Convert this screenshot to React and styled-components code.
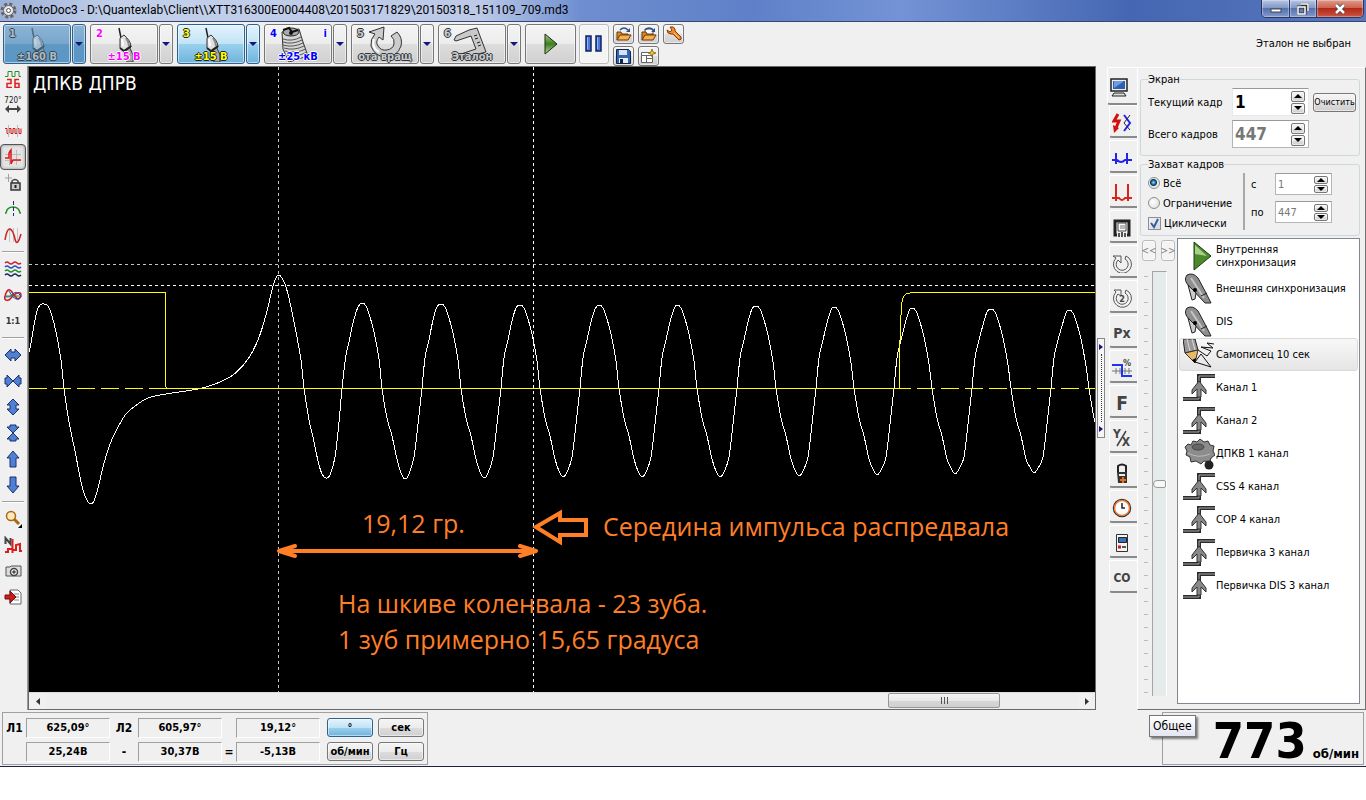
import { useState } from 'react';
import styled, { createGlobalStyle, css } from 'styled-components';

const GlobalStyle = createGlobalStyle`
  * { box-sizing: border-box; }
  body {
    margin: 0;
    background: #ffffff;
    color: #000000;
    font-family: "DejaVu Sans Condensed", "Noto Sans", sans-serif;
    font-size: 11px;
  }
  button, input {
    font: inherit;
    color: inherit;
    margin: 0;
    padding: 0;
  }
  svg { display: block; flex: none; }
`

const Window = styled.div`
  display: flex;
  flex-direction: column;
  height: calc(100vh - 33px);
  min-height: 640px;
  background: #f0f0f0;
  border-bottom: 1px solid #1b2340;
`

/* title bar */

const TitleBar = styled.header`
  display: flex;
  align-items: center;
  justify-content: space-between;
  height: 22px;
  flex: none;
  padding: 0 2px 0 0;
  border-bottom: 1px solid #36466f;
  background: linear-gradient(90deg, #9cb0d8 0, #c3d0ea 120px, #bccae8 480px, #6f8ed0 580px, #5f80c8 750px, #7493d6 900px, #4566b2 1130px, #5877bd 100%);
`

const TitleText = styled.h1`
  display: flex;
  align-items: center;
  gap: 5px;
  margin: 0;
  font: 400 12px/21px Roboto, "Noto Sans", sans-serif;
  white-space: nowrap;
`

const WindowButtons = styled.div`
  display: flex;
  align-self: flex-start;
  height: 18px;
  border: 1px solid #26365e;
  border-top: 0;
  border-radius: 0 0 5px 5px;
  overflow: hidden;
`

const WindowButton = styled.button`
  display: flex;
  align-items: center;
  justify-content: center;
  width: ${(p) => (p.$close ? 47 : 27)}px;
  border: 0;
  border-left: ${(p) => (p.$first ? '0' : '1px solid #2a3b69')};
  background: ${(p) => p.$close
    ? 'linear-gradient(#dd9a8c, #cf6350 45%, #b22a17 50%, #cd5140)'
    : 'linear-gradient(#b7c5e2, #8298c8 45%, #5671ad 50%, #7f98cd)'};
  box-shadow: inset 0 0 1px 1px rgba(255, 255, 255, 0.35);
`

/* toolbar */

const Toolbar = styled.div`
  display: flex;
  align-items: flex-start;
  height: 44px;
  flex: none;
  padding: 2px 15px 0 3px;
`

const Channel = styled.div`
  display: flex;
  gap: 1px;
  margin-right: 4px;
`

const faces = {
  plain: css`
    background: linear-gradient(#f4f4f4, #ececec 50%, #dddddd 51%, #d0d0d0);
    border-color: #777777;
  `,
  pressed: css`
    background: linear-gradient(#8db4d4, #76a7cd 50%, #5e98c3 51%, #5a97c5);
    border-color: #2f618c;
  `,
  lit: css`
    background: linear-gradient(#e3f3fc, #c2e3f6 50%, #9ad0ee 51%, #6fb3dc);
    border-color: #2c628b;
  `,
  faint: css`
    background: #f4f4f4;
    border-color: #bbbbbb;
  `,
}

const Button = styled.button`
  display: flex;
  align-items: center;
  justify-content: center;
  border: 1px solid;
  border-radius: 3px;
  box-shadow: inset 0 0 0 1px rgba(255, 255, 255, 0.5);
  ${(p) => faces[p.$face || 'plain']}
`

const ChannelButton = styled(Button)`
  position: relative;
  width: 68px;
  height: 40px;
  overflow: hidden;
  color: ${(p) => p.$ink};
  text-shadow: ${(p) => {
    const c = p.$halo
    return `1px 0 ${c}, -1px 0 ${c}, 0 1px ${c}, 0 -1px ${c}`
  }};
`

const ChannelNumber = styled.span`
  position: absolute;
  top: 2px;
  left: 5px;
  font-weight: 700;
  line-height: 13px;
`

const ChannelMark = styled(ChannelNumber)`
  left: auto;
  right: 4px;
`

const ChannelRange = styled.span`
  position: absolute;
  left: 0;
  right: 0;
  bottom: 0;
  font-weight: 700;
  line-height: 12px;
  white-space: nowrap;
  text-align: center;
`

const DropButton = styled(Button)`
  width: 14px;
  height: 40px;
`

const PlayButton = styled(Button)`
  width: 51px;
  height: 40px;
  margin-right: 3px;
`

const PauseButton = styled(Button)`
  width: 30px;
  height: 40px;
  margin-right: 4px;
`

const FileButtons = styled.div`
  display: grid;
  grid-template-columns: repeat(3, 21px);
  gap: 2px 4px;
`

const FileButton = styled(Button)`
  width: 21px;
  height: 20px;
`

const Reference = styled.p`
  margin: 13px 0 0 auto;
  line-height: 14px;
`

/* middle part */

const Main = styled.main`
  display: flex;
  flex: 1;
  min-height: 0;
`

const Tools = styled.nav`
  display: flex;
  flex-direction: column;
  align-items: center;
  width: 28px;
  flex: none;
  border-right: 1px solid #9a9a9a;
  padding-right: 1px;
`

const Tool = styled.button`
  display: flex;
  align-items: center;
  justify-content: center;
  width: 26px;
  height: 26px;
  flex: none;
  border: 1px solid ${(p) => (p.$active ? '#555555' : 'transparent')};
  border-radius: 4px;
  background: ${(p) => (p.$active ? '#e4e4e4' : 'none')};
  box-shadow: ${(p) => (p.$active ? 'inset 0 0 3px #888888' : 'none')};
`

const ToolLine = styled.hr`
  width: 22px;
  height: 2px;
  flex: none;
  margin: 3px 0;
  border: 0;
  background: #a0a0a0;
  border-bottom: 1px solid #ffffff;
`

const Scope = styled.section`
  display: flex;
  flex-direction: column;
  flex: 1;
  min-width: 0;
  border: 1px solid #696969;
`

const Screen = styled.div`
  flex: 1;
  min-height: 0;
  background: #000000;

  svg {
    width: 100%;
    height: 100%;
  }
`

const ScrollBar = styled.div`
  display: flex;
  justify-content: space-between;
  height: 17px;
  flex: none;
  background: #eeeeee;
  border-top: 1px solid #dddddd;
`

const ScrollArrow = styled.button`
  display: flex;
  align-items: center;
  justify-content: center;
  width: 17px;
  border: 0;
  background: #f0f0f0;
`

const ScrollTrack = styled.div`
  display: flex;
  flex: 1;
  justify-content: flex-end;
  padding-right: 78px;
`

const ScrollThumb = styled.div`
  display: flex;
  align-items: center;
  justify-content: center;
  gap: 2px;
  width: 112px;
  height: 15px;
  border: 1px solid #979797;
  border-radius: 2px;
  background: linear-gradient(#f5f5f5, #e9e9e9 50%, #d6d6d6 51%, #d0d0d0);
`

const Grip = styled.i`
  width: 1px;
  height: 7px;
  background: #555555;
`

const Splitter = styled.div`
  display: flex;
  align-items: center;
  width: 11px;
  flex: none;
`

const SplitterHandle = styled.button`
  display: flex;
  flex-direction: column;
  align-items: center;
  justify-content: space-between;
  width: 8px;
  height: 100px;
  margin-left: 1px;
  padding: 5px 0;
  border: 1px solid #888888;
  background: #f6f6f6;
`

const Dots = styled.i`
  height: 68px;
  border-left: 1px dotted #333333;
`

const Tabs = styled.div`
  display: flex;
  flex-direction: column;
  width: 30px;
  flex: none;
  padding-top: 1px;
`

const Tab = styled.button`
  display: flex;
  align-items: center;
  justify-content: center;
  width: ${(p) => (p.$active ? 30 : 28)}px;
  height: ${(p) => (p.$active ? 38 : 33)}px;
  flex: none;
  align-self: flex-end;
  margin-bottom: ${(p) => (p.$active ? 0 : 2)}px;
  padding: 4px ${(p) => (p.$active ? 8 : 4)}px 0 0;
  border: 0;
  border-left: 1px solid #ffffff;
  border-top: 1px solid #ffffff;
  border-bottom: 2px solid #8a8a8a;
  border-radius: 2px 0 0 3px;
  background: none;
`

const Panel = styled.aside`
  display: flex;
  flex-direction: column;
  width: 229px;
  flex: none;
  margin-top: 1px;
  padding: 5px 5px 5px 2px;
  border: 1px solid;
  border-color: #ffffff #707070 #707070 #ffffff;
`

const Group = styled.fieldset`
  min-width: 0;
  height: ${(p) => p.$height}px;
  flex: none;
  margin: 0 0 2px;
  padding: 0 3px 0 7px;
  border: 1px solid #cdd8dd;
  border-radius: 3px;
`

const Legend = styled.legend`
  padding: 0;
  line-height: 13px;
`

const FrameRow = styled.div`
  display: grid;
  grid-template-columns: 84px 81px 43px;
  align-items: center;
  height: 32px;

  label { white-space: nowrap; }
`

const SpinBox = styled.div`
  display: flex;
  align-items: center;
  justify-content: space-between;
  width: ${(p) => (p.$small ? 57 : 77)}px;
  height: ${(p) => (p.$small ? 22 : 28)}px;
  padding: 0 3px 0 2px;
  border: 1px solid ${(p) => (p.$live ? '#e3e9ef' : '#b5b5b5')};
  border-top-color: #999999;
  background: #ffffff;
`

const SpinInput = styled.input`
  flex: 1;
  width: 20px;
  height: 100%;
  border: 0;
  outline: 0;
  background: none;
  color: ${(p) => (p.$live ? '#000000' : '#777777')};
  font-size: ${(p) => (p.$small ? 11 : 17)}px;
  font-weight: ${(p) => (p.$small ? 400 : 700)};
`

const SpinButtons = styled.div`
  display: flex;
  flex-direction: column;
  gap: 1px;
`

const SpinButton = styled(Button)`
  width: 14px;
  height: ${(p) => (p.$small ? 8 : 11)}px;
  border-radius: 2px;
`

const ClearButton = styled(Button)`
  width: 43px;
  height: 19px;
  font-size: 9px;
  overflow: hidden;
  white-space: nowrap;
`

const Capture = styled.div`
  display: flex;
  padding-top: 2px;
`

const CaptureModes = styled.div`
  display: flex;
  flex-direction: column;
  width: 97px;
  border-right: 2px solid #a8a8a8;
  height: 57px;
`

const Choice = styled.label`
  display: flex;
  align-items: center;
  gap: 3px;
  height: 20px;
  flex: none;
  white-space: nowrap;
`

const Radio = styled.input`
  appearance: none;
  width: 12px;
  height: 12px;
  flex: none;
  border: 1px solid #8e8f8f;
  border-radius: 50%;
  background: radial-gradient(circle at 40% 40%, #ffffff, #d8d8d8);

  &:checked {
    background: radial-gradient(circle at 45% 45%, #9fe0f5 0, #1b6f9e 2px, #0b3551 3px, #e3e9ec 4px);
  }
`

const Check = styled.input`
  appearance: none;
  width: 13px;
  height: 13px;
  flex: none;
  border: 1px solid #8e8f8f;
  background: #eef1f4;

  &:checked {
    background: #eef1f4 linear-gradient(135deg, transparent, #d3dae4);
  }
`

const CheckWrap = styled.span`
  display: grid;

  > * { grid-area: 1 / 1; }
  > svg { pointer-events: none; }
`

const Limits = styled.div`
  display: grid;
  grid-template-columns: 18px 57px;
  row-gap: 6px;
  column-gap: 6px;
  align-items: center;
  align-content: start;
  padding-left: 6px;
`

const Lower = styled.div`
  display: flex;
  flex: 1;
  min-height: 0;
`

const GainColumn = styled.div`
  display: flex;
  flex-direction: column;
  width: 37px;
  flex: none;
  padding: 2px 2px 8px;
`

const NavButtons = styled.div`
  display: flex;
  justify-content: space-between;
  margin-bottom: 10px;
`

const NavButton = styled(Button)`
  width: 14px;
  height: 21px;
  color: #888888;
  font-size: 10px;
`

const Gain = styled.div`
  display: flex;
  flex: 1;
  min-height: 0;
  justify-content: space-between;
  padding: 0 8px 0 2px;
`

const Ticks = styled.i`
  width: 4px;
  margin-top: 5px;
  background: repeating-linear-gradient(#bbbbbb 0 1px, transparent 1px 13px);
`

const GainSlider = styled.input`
  appearance: none;
  writing-mode: vertical-lr;
  width: 15px;
  height: 100%;
  border-left: 1px solid #a5a5a5;
  border-top: 1px solid #a5a5a5;
  border-right: 1px solid #ffffff;
  background: #e5eaeb;

  &::-webkit-slider-thumb {
    appearance: none;
    width: 13px;
    height: 8px;
    border: 1px solid #999999;
    border-radius: 4px 2px 2px 4px;
    background: #f7f7f7;
  }
`

const SyncList = styled.ul`
  flex: 1;
  margin: 0;
  padding: 0 1px;
  list-style: none;
  overflow: hidden;
  border: 1px solid #828790;
  background: #ffffff;
`

const SyncItem = styled.li`
  display: flex;
  align-items: center;
  gap: 1px;
  height: 33px;
  padding-left: 3px;
  line-height: 13px;
  border: 1px solid ${(p) => (p.$active ? '#d9d9d9' : 'transparent')};
  border-radius: 3px;
  background: ${(p) => (p.$active ? 'linear-gradient(#f8f8f8, #e5e5e5)' : 'none')};
`

/* bottom */

const Status = styled.footer`
  display: flex;
  justify-content: space-between;
  height: 56px;
  flex: none;
  padding: 2px 2px 1px;
`

const Readings = styled.div`
  display: grid;
  grid-template-columns: 23px 84px 28px 84px 14px 84px 53px 51px;
  grid-template-rows: 20px 20px;
  row-gap: 4px;
  padding: 5px 3px 0 0;
  border: 1px solid #a0a0a0;
  font-weight: 700;
  line-height: 20px;
  text-align: center;
`

const Name = styled.span`
  font-size: 12px;
`

const Value = styled.output`
  border: 1px solid;
  border-color: #a0a0a0 #ffffff #ffffff #a0a0a0;
  line-height: 18px;
`

const UnitButton = styled(Button)`
  width: 46px;
  height: 19px;
  justify-self: end;
  font-weight: 700;
`

const Speed = styled.div`
  position: relative;
  display: flex;
  align-items: flex-end;
  justify-content: flex-end;
  gap: 6px;
  width: 202px;
  padding: 0 4px 2px 0;
  border: 1px solid #a0a0a0;
  font-weight: 700;
`

const SpeedValue = styled.output`
  font-size: 50px;
  line-height: 42px;
`

const SpeedUnit = styled.span`
  font-size: 13px;
  line-height: 16px;
`

const Tooltip = styled.div`
  position: absolute;
  top: 2px;
  left: -14px;
  padding: 0 3px;
  border: 1px solid #767676;
  background: linear-gradient(#ffffff, #e4e5f0);
  box-shadow: 2px 2px 2px rgba(0, 0, 0, 0.5);
  font-size: 12px;
  font-weight: 400;
  line-height: 20px;
`

/* icons */

const Tri = ({ dir = 'down', w = 8, h = 4, fill = '#14147c' }) => {
  const points = {
    down: `0,0 ${w},0 ${w / 2},${h}`,
    up: `0,${h} ${w},${h} ${w / 2},0`,
    left: `${w},0 ${w},${h} 0,${h / 2}`,
    right: `0,0 0,${h} ${w},${h / 2}`,
  }
  return <svg width={w} height={h}><polygon points={points[dir]} fill={fill} /></svg>
}

const metal = { stroke: '#333', strokeWidth: 1, strokeLinejoin: 'round' }

const ProbeIcon = ({ dim }) => (
  <svg width="40" height="36" viewBox="0 0 40 36" opacity={dim ? 0.5 : 1}>
    <path d="M15 2l2 10" stroke="#222" strokeWidth="1.5" />
    <path d="M20 27l5-7 4 9v7h-6z" fill="#aaa" {...metal} />
    <path d="M16 12l4-3q7 6 7 12l-7 5-4-4z" fill="#e0e0e0" {...metal} />
    <path d="M16 22l4 3 7-5" fill="none" stroke="#222" strokeWidth="2" />
    <path d="M18 13l1 7" stroke="#fff" strokeWidth="2" />
    <path d="M22 12q3 4 3 8" fill="none" stroke="#888" strokeWidth="2" />
  </svg>
)

const CoilIcon = () => (
  <svg width="40" height="36" viewBox="0 0 40 36">
    <path d="M4 6l17-3 4 13 5 14-19 6-6-13z" fill="#d6d6d6" {...metal} />
    <ellipse cx="13" cy="6" rx="8" ry="4" fill="#aaa" stroke="#222" />
    <path d="M5 4l6-2 3 4 6-2" fill="none" stroke="#111" strokeWidth="2" />
    <path d="M5 13q9 3 18-2M5 16q9 3 19-2M5 19q10 3 20-2M6 22q10 3 20-2M7 25q10 3 21-2M9 29q9 3 20-3" fill="none" stroke="#555" />
    <circle cx="13" cy="7" r="2" fill="#111" />
  </svg>
)

const RotateIcon = () => (
  <svg width="40" height="36" viewBox="0 0 40 36">
    <path d="M26 10l6-4q6 6 4 14-4 11-15 11T6 20q-1-7 4-12L4 6l15-5-1 13-4-3q-4 5-1 9 3 5 9 4t7-6q1-5-3-8z" fill="#ccc" {...metal} />
    <path d="M9 13q-3 9 5 13" fill="none" stroke="#fff" strokeWidth="2" />
  </svg>
)

const CaliperIcon = () => (
  <svg width="40" height="36" viewBox="0 0 40 36">
    <path d="M17 4l8-2 9 24-24 6-4 0 3-4 15-5-5-13-15 5-2-1 2-4z" fill="#c9c9c9" {...metal} />
    <path d="M22 10l3-1M23 13l3-1M25 17l3-1M26 20l3-1" stroke="#222" />
  </svg>
)

const PlayIcon = ({ w, h }) => (
  <svg width={w} height={h} viewBox="0 0 14 22">
    <defs>
      <linearGradient id="play" x2="0" y2="1">
        <stop offset="0" stopColor="#a9cf83" />
        <stop offset="0.500" stopColor="#3f7d22" />
        <stop offset="1" stopColor="#b5dc8c" />
      </linearGradient>
    </defs>
    <path d="M1 1l12 10L1 21z" fill="url(#play)" stroke="#1d2b14" />
  </svg>
)

const PauseIcon = () => (
  <svg width="18" height="18">
    <path d="M1 1h5v15H1zM11 1h5v15h-5z" fill="#4a7ae0" stroke="#14225c" strokeWidth="1.500" />
    <path d="M2.500 2v12M12.500 2v12" stroke="#8fb2ff" />
  </svg>
)

const FolderIcon = ({ page }) => (
  <svg width="17" height="17" viewBox="0 0 17 17">
    {page && <path d="M5 3h8v9H5z" fill="#fff" stroke="#555" />}
    <path d="M2 14V6h4l1 2h6v2" fill="#d98a2a" stroke="#6b3a08" />
    <path d="M2 14l3-5h11l-3 5z" fill="#f9ae4f" stroke="#6b3a08" />
    <path d="M5 4q4-4 8 0" fill="none" stroke="#2d4f8f" strokeWidth="1.500" />
    <path d="M15 2v4h-4z" fill="#2d4f8f" />
  </svg>
)

const SaveIcon = () => (
  <svg width="17" height="17" viewBox="0 0 17 17">
    <path d="M1.500 1.500h12l2 2v12h-14z" fill="#3465b0" stroke="#12244c" />
    <path d="M4 2h8v5H4z" fill="#d6e2f4" />
    <path d="M4 10h9v5H4z" fill="#e8eef8" />
    <path d="M5 11h3v4H5z" fill="#12244c" />
  </svg>
)

const SheetIcon = () => (
  <svg width="17" height="17" viewBox="0 0 17 17">
    <path d="M1.500 4.500h11v10h-11zM2 7.500h11M6.500 7v7M6 10.500h6" fill="#fff" stroke="#666" />
    <path d="M12 1l1 3 3 1-3 1-1 3-1-3-3-1 3-1z" fill="#e8c840" stroke="#8a6500" strokeWidth=".8" />
  </svg>
)

const WrenchIcon = () => (
  <svg width="18" height="18" viewBox="0 0 18 18">
    <path d="M2 5l3 2 2-2-2-3q4-1 5 2v2l6 6q1 3-2 3L8 9H6Q2 9 2 5z" fill="#f38b29" stroke="#8a3c05" />
    <path d="M9 8l5 5" stroke="#ffc78a" />
  </svg>
)

const GearIcon = () => (
  <svg width="17" height="17" viewBox="0 0 17 17">
    <circle cx="8.500" cy="8.500" r="6.500" fill="none" stroke="#666" strokeWidth="3" strokeDasharray="3 2.100" />
    <circle cx="8.500" cy="8.500" r="5" fill="#ececec" stroke="#666" />
    <circle cx="8.500" cy="8.500" r="2" fill="#fff" stroke="#555" />
  </svg>
)

const Icon = ({ children, size = 18 }) => (
  <svg width={size} height={size} viewBox={`0 0 ${size} ${size}`} fill="none" strokeWidth="1.5">{children}</svg>
)

const blueShape = { fill: '#4f81d0', stroke: '#1b2f73', strokeWidth: 1 }

const sideTools = [
  ['Период', <Icon><path d="M1 6.500h3v-5h4v5h3v-5h4v5h2" stroke="#2a8f2a" strokeWidth="1" /><path d="M3 9.500h4v4H3v4h5M15 9.500h-4v8h4v-4h-4" stroke="#dd1c1c" /></Icon>],
  ['720 градусов', <Icon><text x="9" y="7" fontSize="8" fill="#222" textAnchor="middle">720°</text><path d="M1 13l4-4v3h8V9l4 4-4 4v-3H5v3z" fill="#444" /></Icon>],
  ['Пачка импульсов', <Icon><path d="M1 6.500h2v5h2v-5h2v5h2v-5h2v5h2v-5h2v5h2v-5" stroke="#cc1b1b" strokeWidth="1" /><path d="M4.500 3v12M13.500 3v12" stroke="#bbb" strokeWidth="1" /></Icon>],
  ['Синхронизация', <Icon><path d="M1 6.500h16M1 12.500h16M5.500 2v15M12.500 2v15" stroke="#bbb" strokeWidth="1" /><path d="M1 10h4V5l2-3v14l2-4h8" stroke="#e01818" /></Icon>],
  ['Закрепить', <Icon><path d="M1 4h7M4.500 0v8" stroke="#a79aab" strokeWidth="1" /><path d="M8 9V7q3-3 6 0v2" stroke="#444" /><rect x="7" y="9" width="9" height="7" fill="#ccc" stroke="#333" /><path d="M11.500 11v3" stroke="#222" strokeWidth="2" /></Icon>],
  ['Центр', <Icon><path d="M1 13h1q1-6 7-6t7 6h1" stroke="#1f8f1f" /><path d="M9.500 1v15" stroke="#1c2c80" strokeDasharray="4 2" strokeWidth="1" /></Icon>],
  ['Кривая', <Icon><path d="M5.500 2v14M9.500 2v14M13.500 2v14" stroke="#c4c4c4" strokeWidth="1" /><path d="M1 14Q3 2 6 3t5 10 6-5" stroke="#cc2020" /></Icon>],
  null,
  ['Слои', <Icon>{['#cc2020', '#2a48c8', '#1f8f1f', '#16246a'].map((c, i) => <path key={c} d={`M1 ${3 + i * 4}q2-2 4 0t4 0 4 0 4 0`} stroke={c} />)}</Icon>],
  ['Наложение', <Icon><path d="M1 10Q4 0 8 6t6 7q3-1 3-4t-4-2Q9 9 7 12t-5 2q-2-1-1-4z" stroke="#d01d1d" /><path d="M1 11q5 1 8-3t8 2q-1 4-5 3T5 5" stroke="#2a48c8" strokeWidth="1" /><path d="M2 10h14" stroke="#1f8f1f" strokeWidth="1" /></Icon>],
  ['Масштаб 1:1', <Icon><text x="9" y="12" fontSize="9" fontWeight="700" fill="#333" textAnchor="middle">1:1</text></Icon>],
  null,
  ['Растянуть по горизонтали', <Icon><path d="M1 9l6-6v3h4V3l6 6-6 6v-3H7v3z" {...blueShape} /></Icon>],
  ['Сжать по горизонтали', <Icon><path d="M9 9L3 3v3H1v6h2v3zM9 9l6-6v3h2v6h-2v3z" {...blueShape} /></Icon>],
  ['Растянуть по вертикали', <Icon><path d="M9 1l6 6h-3v4h3l-6 6-6-6h3V7H3z" {...blueShape} /></Icon>],
  ['Сжать по вертикали', <Icon><path d="M9 9L3 3h3V1h6v2h3zM9 9l6 6h-3v2H6v-2H3z" {...blueShape} /></Icon>],
  ['Вверх', <Icon><path d="M9 1l6 7h-3v9H6V8H3z" {...blueShape} /></Icon>],
  ['Вниз', <Icon><path d="M9 17l6-7h-3V1H6v9H3z" {...blueShape} /></Icon>],
  null,
  ['Лупа', <Icon><circle cx="7" cy="6" r="4.500" fill="#ffeabf" stroke="#a8690c" /><path d="M10 9l5 5" stroke="#a8690c" strokeWidth="3" /><path d="M18 14v4h-4z" fill="#000" /></Icon>],
  ['Шум', <Icon><path d="M1.500 8V2l5 6V2" stroke="#444" strokeWidth="2" /><path d="M1 16h3v-3h4M8.500 3v14M9 14h3V9l4-1v7h2" stroke="#dd1c1c" strokeWidth="2" /></Icon>],
  ['Снимок', <Icon><path d="M2 5h4l1-1h10v10H2z" fill="#ddd" stroke="#555" strokeWidth="1" /><circle cx="10" cy="10" r="3.500" fill="#fff" stroke="#444" /><circle cx="10" cy="10" r="1" stroke="#444" /></Icon>],
  ['Экспорт', <Icon><path d="M6 2h8l3 3v11H6z" fill="#fff" stroke="#666" strokeWidth="1" /><path d="M10 6h5M10 9h5M10 12h5" stroke="#888" strokeWidth="1" /><path d="M1 7h5V3l6 6-6 6v-4H1z" fill="#c91c1c" stroke="#7a0c0c" strokeWidth="1" /></Icon>],
]

const glyph = { fill: '#444', fontWeight: 700, textAnchor: 'middle' }

const tabs = [
  ['Общее', <Icon size={20}><path d="M2 1h16v12H2z" fill="#eee" stroke="#222" /><path d="M4 3h12v8H4z" fill="#2d5fb5" /><path d="M5 10l9-6v-1H5z" fill="#6f9be0" /><path d="M5 15h10l2 3H3z" fill="#ddd" stroke="#222" strokeWidth="1" /></Icon>],
  ['Зажигание', <Icon size={20}><path d="M6 1L2 8h5l-3 7" stroke="#d40d0d" strokeWidth="3" /><path d="M1 12l1 8 5-5z" fill="#d40d0d" /><path d="M12 2l6 8-6 8" stroke="#2323ee" strokeWidth="2" /><path d="M18 2l-6 8 6 7" stroke="#223" strokeWidth="1" /></Icon>],
  ['Первичка', <Icon size={20}><path d="M0 12h5q4 4 8 0h7M4 5v11M15 5v11" stroke="#2323ee" strokeWidth="2" /></Icon>],
  ['Вторичка', <Icon size={20}><path d="M0 15h7q3 4 6 0h7M4 1v17M16 1v17" stroke="#d9221a" strokeWidth="2" /></Icon>],
  ['Отчёт', <Icon size={20}><path d="M5 17H3V3h14v14h-2" stroke="#222" strokeWidth="3" /><path d="M6 5h8v8H6z" fill="#fff" stroke="#444" strokeWidth="1" /><path d="M8 8h5M8 10h5" stroke="#777" strokeWidth="1" /><path d="M10 14v5M7 19v-4M13 19v-4" stroke="#222" /></Icon>],
  ['Вращение', <Icon size={20}><path d="M14 3a9 9 0 1 1-10 2L1 3h8v7L6 7a6 6 0 1 0 7-1z" fill="#f3f3f3" stroke="#555" strokeWidth="1" /></Icon>],
  ['Вращение 2', <Icon size={20}><path d="M14 2a9 9 0 1 1-10 2L2 2h7v6L6 6a6 6 0 1 0 7-1z" fill="#f3f3f3" stroke="#555" strokeWidth="1" /><text x="10" y="14" fontSize="9" {...glyph}>2</text></Icon>],
  ['Px', <Icon size={20}><text x="10" y="15" fontSize="14" {...glyph}>Px</text></Icon>],
  ['Скважность', <Icon size={20}><path d="M0 13h20M4 10v6M8 10v6M13 10v6M17 10v6" stroke="#777" strokeWidth="1" /><path d="M0 7h10v11h10" stroke="#1c35f0" strokeWidth="2" /><text x="15" y="8" fontSize="9" {...glyph}>%</text></Icon>],
  ['F', <Icon size={22}><text x="11" y="18" fontSize="19" {...glyph}>F</text></Icon>],
  ['Y/X', <Icon size={20}><text x="5" y="10" fontSize="12" {...glyph}>Y</text><text x="14" y="18" fontSize="12" {...glyph}>X</text><path d="M14 3L5 18" stroke="#444" /></Icon>],
  ['Клещи', <Icon size={20}><path d="M6 10V3q4-3 8 0v7" stroke="#222" strokeWidth="2" /><path d="M5 9h10v11H6z" fill="#333" /><path d="M7 11h6v2H7z" fill="#eee" /><path d="M8 17h6M11 14v6" stroke="#f06a1e" strokeWidth="2" /></Icon>],
  ['Время', <Icon size={20}><circle cx="10" cy="10" r="8.500" fill="#fff" stroke="#333" /><circle cx="10" cy="10" r="7.500" stroke="#ee7c33" /><path d="M10 5v5h3" stroke="#222" /></Icon>],
  ['Прибор', <Icon size={20}><path d="M4.500 1.500h11v17h-11z" fill="#f4f4f4" stroke="#333" strokeWidth="1" /><path d="M6.500 4.500h8v5h-8z" fill="#3a70b8" stroke="#222" strokeWidth="1" /><path d="M6 14h3" stroke="#d11" strokeWidth="3" /><path d="M10 14h4" stroke="#555" strokeWidth="2" /></Icon>],
  ['CO', <Icon size={20}><text x="10" y="14" fontSize="12" {...glyph}>CO</text></Icon>],
]

const modeIcons = {
  play: <svg width="32" height="32" viewBox="0 0 32 32"><path d="M11 2l17 14-17 14z" fill="#4b8a2a" stroke="#1f3a14" /><path d="M12 5l12 11-12-2z" fill="#a9cf8a" /></svg>,
  clip: <svg width="32" height="32" viewBox="0 0 32 32"><path d="M4 2Q10-1 15 5l8 15 5 10h-6L6 13Q0 7 4 2z" fill="#8f8f8f" stroke="#222" /><path d="M8 5l13 20" stroke="#c4c4c4" strokeWidth="2" /><path d="M5 12l4 15 3-1 1-6z" fill="#ccc" stroke="#222" /><circle cx="12" cy="17" r="2" /><path d="M18 23l6-3" stroke="#222" /></svg>,
  pencil: <svg width="32" height="32" viewBox="0 0 32 32"><path d="M0 0h12l3 11-13 3z" fill="#999" stroke="#222" /><path d="M4 0l3 12M9 0l3 11" stroke="#ddd" /><path d="M2 14l13-3-3 13z" fill="#e9b765" stroke="#333" /><path d="M9 21l4-2-1 5z" /><path d="M12 23l16 5-10-13-6 8M15 11l9 6 4-5-10-4 12 1-6-5 7 1" fill="none" stroke="#111" /></svg>,
  edge: <svg width="32" height="32" viewBox="0 0 32 32"><path d="M0 27h16V4h16" fill="none" stroke="#2b2b2b" strokeWidth="4" /><path d="M0 27h16V4h16" fill="none" stroke="#aaa" strokeWidth="1" /><path d="M16 9l-7 9v4l5-5v8h4v-8l5 5v-4z" fill="#888" stroke="#333" /></svg>,
  gear: <svg width="32" height="32" viewBox="0 0 32 32"><path d="M2 9l3-3 3 1 2-4 4 1 3-3 4 3 4-1 2 4 4 1-1 5 2 4-4 3-1 4-6-1-3 3-5-3-5 1-1-5-4-2 1-4z" fill="#8c8c8c" stroke="#333" /><ellipse cx="15" cy="9" rx="6" ry="3" fill="#666" stroke="#444" /><path d="M5 15q10 6 22 1" fill="none" stroke="#bbb" /><circle cx="26" cy="27" r="4.500" fill="#222" /></svg>,
}

const syncModes = [
  ['play', 'Внутренняя синхронизация'],
  ['clip', 'Внешняя синхронизация'],
  ['clip', 'DIS'],
  ['pencil', 'Самописец 10 сек'],
  ['edge', 'Канал 1'],
  ['edge', 'Канал 2'],
  ['gear', 'ДПКВ 1 канал'],
  ['edge', 'CSS 4 канал'],
  ['edge', 'COP 4 канал'],
  ['edge', 'Первичка 3 канал'],
  ['edge', 'Первичка DIS 3 канал'],
]

const channels = [
  { n: 1, range: '±160 В', face: 'pressed', ink: '#a9bccb', halo: '#3b454d', icon: <ProbeIcon dim /> },
  { n: 2, range: '±15 В', ink: '#ff00ff', halo: '#ffffff', icon: <ProbeIcon /> },
  { n: 3, range: '±15 В', face: 'lit', ink: '#ffff00', halo: '#222222', icon: <ProbeIcon /> },
  { n: 4, range: '±25 кВ', mark: 'i', ink: '#0000ff', halo: '#ffffff', icon: <CoilIcon /> },
  { n: 5, range: 'ота вращ', ink: '#c4ccd2', halo: '#333333', icon: <RotateIcon /> },
  { n: 6, range: 'Эталон', ink: '#c4ccd2', halo: '#333333', icon: <CaliperIcon /> },
]

/* oscillogram */

const peaks = [
  [362, 303], [441, 304], [520, 305], [599, 305], [677, 305], [756, 306],
  [834, 307], [912, 308], [991, 309], [1069, 310],
]

const leadIn = [
  [29, 352], [31, 343], [34, 325], [37, 311], [40, 305], [44, 304], [48, 306], [52, 316], [56, 332], [61, 360],
  [64, 388], [69, 422], [75, 451], [80, 477], [84, 493], [88, 502], [91, 504], [94, 501], [98, 488], [103, 467],
  [108, 450], [113, 437], [118, 427], [126, 414], [135, 406], [148, 398], [166, 394],
  [198, 389], [215, 384], [233, 375], [248, 359], [258, 340], [266, 315], [272, 290], [276, 278], [279, 275],
  [282, 278], [286, 287], [291, 307], [296, 332], [301, 360], [304, 388], [309, 420], [313, 437], [318, 461],
  [322, 474], [326, 478], [330, 475], [335, 457], [339, 422], [342, 388], [346, 355], [349, 342], [353, 323], [358, 307],
]

const tooth = ([x, y]) => [
  [x, y], [x + 4, y + 3], [x + 8, y + 14], [x + 12, y + 29], [x + 17, y + 56], [x + 20, 388], [x + 25, 418],
  [x + 30, 436], [x + 35, 459], [x + 39, 776 - y], [x + 43, 782 - y], [x + 47, 777 - y], [x + 52, 457], [x + 56, 424],
  [x + 60, 388], [x + 63, 358], [x + 67, 340], [x + 71, y + 17], [x + 75, y + 4],
]

// Catmull-Rom spline through the samples
const spline = (pts) => pts.slice(0, -1).reduce((d, p, i) => {
  const a = pts[i - 1] || p
  const b = pts[i + 1]
  const c = pts[i + 2] || b
  return `${d}C${p[0] + (b[0] - a[0]) / 6} ${p[1] + (b[1] - a[1]) / 6} ${b[0] - (c[0] - p[0]) / 6} ${b[1] - (c[1] - p[1]) / 6} ${b[0]} ${b[1]}`
}, `M${pts[0][0]} ${pts[0][1]}`)

const wave = spline([...leadIn, ...peaks.flatMap(tooth)])

const note = { fill: '#ff7f27', fontFamily: '"Open Sans", "Noto Sans", sans-serif', fontSize: 25 }

const Oscillogram = () => (
  <svg viewBox="29 67 1066 625" fill="none">
    <g shapeRendering="crispEdges">
      <path d="M29 264.500H1095M278.500 67V692" stroke="#c4c4c4" strokeDasharray="3 3" />
      <path d="M29 285.500H1095M533.500 67V692" stroke="#fff" strokeDasharray="3 3" />
      <path d={wave} stroke="#fff" />
      <path d="M29 388.500H1095" stroke="#ff0" strokeDasharray="18 6" />
      <path d="M29 292.500H165.500V386L167 388.500H899.500V359L900.500 322 902 302Q903 293 910 293L912 292.500H1095" stroke="#ff0" />
    </g>
    <text x="33" y="90" fill="#fff" fontSize="19">ДПКВ ДПРВ</text>
    <path d="M281 551H534" stroke="#ff7f27" strokeWidth="4" />
    <path d="M295 546L279 551L295 556M520 546L536 551L520 556" stroke="#ff7f27" strokeWidth="4" strokeLinecap="round" strokeLinejoin="round" />
    <path d="M536 527L560 513V520H586V535H560V542Z" stroke="#ff7f27" strokeWidth="4" />
    <text x="362" y="533" {...note}>19,12 гр.</text>
    <text x="603" y="536" {...note}>Середина импульса распредвала</text>
    <text x="338" y="613" {...note}>На шкиве коленвала - 23 зуба.</text>
    <text x="338" y="649" {...note}>1 зуб примерно 15,65 градуса</text>
  </svg>
)

const Spin = ({ id, value, small, live }) => {
  const [current, setCurrent] = useState(value)
  return (
    <SpinBox $small={small} $live={live}>
      <SpinInput id={id} value={current} $small={small} $live={live} onChange={(e) => setCurrent(e.target.value)} />
      <SpinButtons>
        <SpinButton $small={small} aria-label="Больше" onClick={() => setCurrent(Number(current) + 1)}>
          <Tri dir="up" fill="#000" />
        </SpinButton>
        <SpinButton $small={small} aria-label="Меньше" onClick={() => setCurrent(Number(current) - 1)}>
          <Tri fill="#000" />
        </SpinButton>
      </SpinButtons>
    </SpinBox>
  )
}

const App = () => {
  return (
    <>
      <GlobalStyle />
      <Window>
        <TitleBar>
          <TitleText>
            <GearIcon />
            MotoDoc3 - D:\Quantexlab\Client\\XTT316300E0004408\201503171829\20150318_151109_709.md3
          </TitleText>
          <WindowButtons>
            <WindowButton $first aria-label="Свернуть">
              <svg width="12" height="12"><rect x="1" y="6" width="10" height="3" fill="#fff" stroke="#444" /></svg>
            </WindowButton>
            <WindowButton aria-label="Восстановить">
              <svg width="12" height="12" fill="none"><path d="M4 1h7v7M1 4h7v7H1z" stroke="#333" strokeWidth="3" /><path d="M4 1h7v7M1 4h7v7H1z" stroke="#fff" strokeWidth="1.500" /></svg>
            </WindowButton>
            <WindowButton $close aria-label="Закрыть">
              <svg width="12" height="12"><path d="M2 2l8 8M10 2l-8 8" stroke="#444" strokeWidth="4" /><path d="M2 2l8 8M10 2l-8 8" stroke="#fff" strokeWidth="2.500" /></svg>
            </WindowButton>
          </WindowButtons>
        </TitleBar>

        <Toolbar>
          {channels.map((ch) => (
            <Channel key={ch.n}>
              <ChannelButton $face={ch.face} $ink={ch.ink} $halo={ch.halo}>
                {ch.icon}
                <ChannelNumber>{ch.n}</ChannelNumber>
                {ch.mark && <ChannelMark>{ch.mark}</ChannelMark>}
                <ChannelRange>{ch.range}</ChannelRange>
              </ChannelButton>
              <DropButton $face={ch.face} aria-label={`Меню канала ${ch.n}`}><Tri /></DropButton>
            </Channel>
          ))}
          <PlayButton aria-label="Пуск"><PlayIcon w={14} h={22} /></PlayButton>
          <PauseButton $face="faint" aria-label="Пауза"><PauseIcon /></PauseButton>
          <FileButtons>
            <FileButton aria-label="Открыть"><FolderIcon /></FileButton>
            <FileButton aria-label="Открыть отчёт"><FolderIcon page /></FileButton>
            <FileButton aria-label="Настройки"><WrenchIcon /></FileButton>
            <FileButton aria-label="Сохранить"><SaveIcon /></FileButton>
            <FileButton aria-label="Новая таблица"><SheetIcon /></FileButton>
          </FileButtons>
          <Reference>Эталон не выбран</Reference>
        </Toolbar>

        <Main>
          <Tools>
            {sideTools.map((tool, i) => tool
              ? <Tool key={tool[0]} aria-label={tool[0]} $active={i === 3}>{tool[1]}</Tool>
              : <ToolLine key={i} />)}
          </Tools>

          <Scope>
            <Screen><Oscillogram /></Screen>
            <ScrollBar>
              <ScrollArrow aria-label="Влево"><Tri dir="left" w={4} h={7} fill="#333" /></ScrollArrow>
              <ScrollTrack>
                <ScrollThumb><Grip /><Grip /><Grip /></ScrollThumb>
              </ScrollTrack>
              <ScrollArrow aria-label="Вправо"><Tri dir="right" w={4} h={7} fill="#333" /></ScrollArrow>
            </ScrollBar>
          </Scope>

          <Splitter>
            <SplitterHandle aria-label="Скрыть панель">
              <Tri dir="right" w={4} h={6} />
              <Dots />
              <Tri dir="right" w={4} h={6} />
            </SplitterHandle>
          </Splitter>

          <Tabs>
            {tabs.map(([name, icon], i) => (
              <Tab key={name} aria-label={name} $active={i === 0}>{icon}</Tab>
            ))}
          </Tabs>

          <Panel>
            <Group $height={83}>
              <Legend>Экран</Legend>
              <FrameRow>
                <label htmlFor="current">Текущий кадр</label>
                <Spin id="current" value={1} live />
                <ClearButton>Очистить</ClearButton>
              </FrameRow>
              <FrameRow>
                <label htmlFor="total">Всего кадров</label>
                <Spin id="total" value={447} />
              </FrameRow>
            </Group>
            <Group $height={78}>
              <Legend>Захват кадров</Legend>
              <Capture>
                <CaptureModes>
                  <Choice><Radio type="radio" name="capture" defaultChecked />Всё</Choice>
                  <Choice><Radio type="radio" name="capture" />Ограничение</Choice>
                  <Choice>
                    <CheckWrap>
                      <Check type="checkbox" defaultChecked />
                      <svg width="13" height="13"><path d="M3 6l3 4 4-8" fill="none" stroke="#3b5a9a" strokeWidth="2" /></svg>
                    </CheckWrap>
                    Циклически
                  </Choice>
                </CaptureModes>
                <Limits>
                  <label htmlFor="from">с</label>
                  <Spin id="from" value={1} small />
                  <label htmlFor="to">по</label>
                  <Spin id="to" value={447} small />
                </Limits>
              </Capture>
            </Group>
            <Lower>
              <GainColumn>
                <NavButtons>
                  <NavButton $face="faint">&lt;&lt;</NavButton>
                  <NavButton $face="faint">&gt;&gt;</NavButton>
                </NavButtons>
                <Gain>
                  <Ticks />
                  <GainSlider type="range" aria-label="Усиление" defaultValue={50} />
                </Gain>
              </GainColumn>
              <SyncList>
                {syncModes.map(([icon, name]) => (
                  <SyncItem key={name} $active={icon === 'pencil'}>
                    {modeIcons[icon]}
                    <span>{name}</span>
                  </SyncItem>
                ))}
              </SyncList>
            </Lower>
          </Panel>
        </Main>

        <Status>
          <Readings>
            <Name>Л1</Name>
            <Value>625,09°</Value>
            <Name>Л2</Name>
            <Value>605,97°</Value>
            <span />
            <Value>19,12°</Value>
            <UnitButton $face="lit">°</UnitButton>
            <UnitButton>сек</UnitButton>
            <span />
            <Value>25,24В</Value>
            <Name>-</Name>
            <Value>30,37В</Value>
            <Name>=</Name>
            <Value>-5,13В</Value>
            <UnitButton>об/мин</UnitButton>
            <UnitButton>Гц</UnitButton>
          </Readings>
          <Speed>
            <Tooltip role="tooltip">Общее</Tooltip>
            <SpeedValue>773</SpeedValue>
            <SpeedUnit>об/мин</SpeedUnit>
          </Speed>
        </Status>
      </Window>
    </>
  );
}

export default App;
